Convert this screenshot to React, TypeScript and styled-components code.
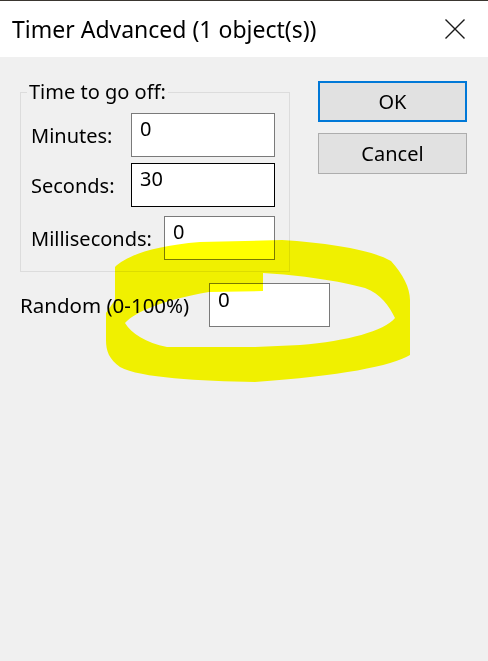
import React from 'react'
import styled, { createGlobalStyle } from 'styled-components'

const GlobalStyle = createGlobalStyle`
  html, body {
    margin: 0;
    padding: 0;
    background: #f0f0f0;
  }
  body {
    font-family: 'Noto Sans', 'Open Sans', sans-serif;
  }
`

const Window = styled.div`
  position: relative;
  width: 488px;
  height: 661px;
  background: #f0f0f0;
  color: #000;
  font-size: 20px;
  overflow: hidden;
`

const TopEdge = styled.div`
  height: 1px;
  background: #3a3630;
`

const TitleBar = styled.div`
  height: 56px;
  background: #fff;
  display: flex;
  align-items: center;
  padding: 0 23px 0 12px;
  font-size: 23px;
`

const Title = styled.span`
  flex: 1;
`

const CloseButton = styled.div`
  width: 20px;
  height: 20px;
  display: flex;
`

const Body = styled.div`
  display: flex;
  padding: 23px 21px 0 20px;
`

const LeftCol = styled.div`
  display: flex;
  flex-direction: column;
  width: 270px;
  flex-shrink: 0;
`

const Group = styled.fieldset`
  margin: 0;
  width: 270px;
  box-sizing: border-box;
  border: 1px solid #dcdcdc;
  padding: 9px 14px 11px 10px;
  min-width: 0;
`

const Legend = styled.legend`
  margin-left: -4px;
  padding: 0 2px;
  line-height: 24px;
`

const FieldRow = styled.div<{ $gap?: number }>`
  display: flex;
  align-items: center;
  justify-content: space-between;
  margin-top: ${p => p.$gap ?? 0}px;
`

const Label = styled.span<{ $width?: number }>`
  white-space: nowrap;
  flex-shrink: 0;
  ${p => (p.$width ? `width: ${p.$width}px;` : '')}
`

const TextBox = styled.div<{ $width: number; $focused?: boolean }>`
  width: ${p => p.$width}px;
  height: 44px;
  flex-shrink: 0;
  box-sizing: border-box;
  background: #fff;
  border: 1px solid ${p => (p.$focused ? '#000' : '#7a7a7a')};
  padding: 3px 8px;
  line-height: 24px;
`

const RandomRow = styled.div`
  display: flex;
  align-items: center;
  margin-top: 11px;
  font-size: 20.5px;
`

const RightCol = styled.div`
  margin-left: auto;
  flex-shrink: 0;
  padding-top: 1px;
  display: flex;
  flex-direction: column;
  gap: 11px;
`

const Button = styled.div<{ $default?: boolean }>`
  width: 149px;
  height: 41px;
  box-sizing: border-box;
  background: #e1e1e1;
  border: ${p => (p.$default ? '2px solid #0078d7' : '1px solid #adadad')};
  display: flex;
  align-items: center;
  justify-content: center;
`

const Highlight = styled.svg`
  position: absolute;
  top: 0;
  left: 0;
  pointer-events: none;
  mix-blend-mode: multiply;
`

// hand-drawn marker ring around the Random field
const outer =
  'M115,267 C125,257 150,246 200,242 L282,240 C330,243 372,250 391,261 C403,274 410,288 410,300 L410,355 C392,366 340,376 255,382 C200,381 140,378 120,367 C109,359 106,351 106,340 L106,313 L115,300 Z'
const inner =
  'M125,323 C135,312 162,300 209,292 L263,291 L263,273 C300,275 340,281 365,288 C381,294 389,306 395,318 C384,331 348,341 300,345 L255,347 L167,347 C146,343 131,333 125,323 Z'

export default function App() {
  return (
    <>
      <GlobalStyle />
      <Window>
        <TopEdge />
        <TitleBar>
          <Title>Timer Advanced (1 object(s))</Title>
          <CloseButton>
            <svg width="20" height="20" viewBox="0 0 20 20">
              <path d="M0.5 0.5 L19.5 19.5 M19.5 0.5 L0.5 19.5" stroke="#1a1a1a" strokeWidth="1.4" fill="none" />
            </svg>
          </CloseButton>
        </TitleBar>
        <Body>
          <LeftCol>
            <Group>
              <Legend>Time to go off:</Legend>
              <FieldRow>
                <Label>Minutes:</Label>
                <TextBox $width={144}>0</TextBox>
              </FieldRow>
              <FieldRow $gap={6}>
                <Label>Seconds:</Label>
                <TextBox $width={144} $focused>30</TextBox>
              </FieldRow>
              <FieldRow $gap={9}>
                <Label>Milliseconds:</Label>
                <TextBox $width={111}>0</TextBox>
              </FieldRow>
            </Group>
            <RandomRow>
              <Label $width={189}>Random (0-100%)</Label>
              <TextBox $width={121}>0</TextBox>
            </RandomRow>
          </LeftCol>
          <RightCol>
            <Button $default>OK</Button>
            <Button>Cancel</Button>
          </RightCol>
        </Body>
        <Highlight width="488" height="661" viewBox="0 0 488 661">
          <path d={`${outer} ${inner}`} fill="#ffff00" fillRule="evenodd" />
        </Highlight>
      </Window>
    </>
  )
}
